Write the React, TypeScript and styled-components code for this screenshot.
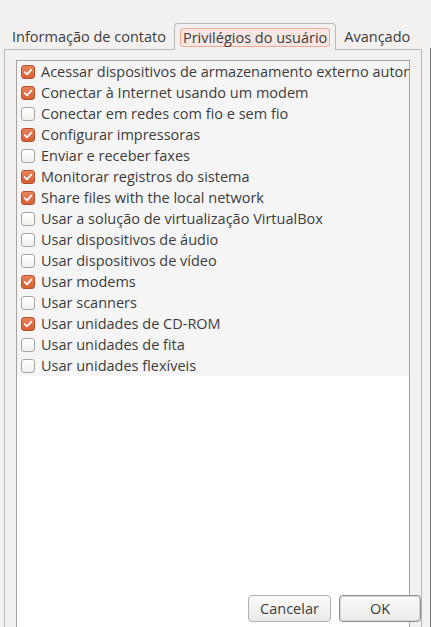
import React from "react";
import styled, { createGlobalStyle, css } from "styled-components";

const Global = createGlobalStyle`
  html, body { margin: 0; padding: 0; background: #f2f1f0; }
  body { font-family: "Open Sans", "Noto Sans", sans-serif; }
`;

const Page = styled.div`
  position: relative;
  width: 431px;
  height: 627px;
  overflow: hidden;
  background: #f2f1f0;
  color: #3c3c3c;
  font-size: 14.5px;
  display: flex;
  flex-direction: column;
  box-sizing: border-box;
  padding-top: 23px;
`;

const EdgeLine = styled.div`
  position: absolute;
  top: 48px;
  bottom: 0;
  left: 430px;
  width: 1px;
  background: #7a7875;
`;

const TabBar = styled.div`
  display: flex;
  align-items: flex-end;
  height: 26px;
  padding-left: 4px;
  position: relative;
  z-index: 1;
`;

const Tab = styled.div<{ $active?: boolean }>`
  height: 26px;
  box-sizing: border-box;
  display: flex;
  align-items: center;
  padding: 0 8px;
  white-space: nowrap;
  ${(p) =>
    p.$active &&
    css`
      height: 27px;
      margin-bottom: -1px;
      padding: 0 5px;
      border: 1px solid #bdbab5;
      border-bottom: none;
      border-radius: 4px 4px 0 0;
      background: #f2f1f0;
    `}
`;

const FocusLabel = styled.span`
  padding: 0 2px;
  border: 1px solid #f0a897;
  border-radius: 3px;
  background: #f6e6e2;
  line-height: 17px;
`;

const Panel = styled.div`
  flex: 1;
  margin: 0 9px 0 4px;
  border: 1px solid #bdbab5;
  border-bottom: none;
  padding: 10px 11px 0 11px;
  display: flex;
  flex-direction: column;
  min-height: 0;
`;

const ListBox = styled.div`
  flex: 1;
  border: 1px solid #a7a4a0;
  border-bottom: none;
  background: #ffffff;
  overflow: hidden;
`;

const Rows = styled.div`
  background: #f5f5f5;
`;

const Row = styled.div`
  height: 21px;
  display: flex;
  align-items: center;
  padding-left: 4px;
  gap: 6px;
  white-space: nowrap;
`;

const Box = styled.span<{ $checked: boolean }>`
  flex: none;
  width: 14px;
  height: 14px;
  box-sizing: border-box;
  border-radius: 3px;
  display: flex;
  align-items: center;
  justify-content: center;
  ${(p) =>
    p.$checked
      ? css`
          background: linear-gradient(#e8825a, #d65f35);
          border: 1px solid #b9502c;
        `
      : css`
          background: linear-gradient(#ffffff, #f1f0ef);
          border: 1px solid #a9a6a2;
        `}
`;

const Label = styled.span`
  line-height: 21px;
`;

const ButtonBar = styled.div`
  position: absolute;
  top: 595px;
  left: 248px;
  display: flex;
  gap: 8px;
`;

const Button = styled.button<{ $default?: boolean }>`
  height: 27px;
  box-sizing: border-box;
  font-family: inherit;
  font-size: 14.5px;
  color: #3c3c3c;
  border-radius: 4px;
  background: linear-gradient(#fbfbfa, #ebeae8);
  border: 1px solid #b3b0ab;
  padding: 0;
  width: 83px;
  ${(p) =>
    p.$default &&
    css`
      width: 82px;
      border: 1px solid #8f8c88;
      box-shadow: inset 0 0 0 1px #d9d7d4;
    `}
`;

const Check = () => (
  <svg width="10" height="10" viewBox="0 0 10 10">
    <path
      d="M1.8 5.2 L4 7.3 L8.3 2.6"
      fill="none"
      stroke="#ffffff"
      strokeWidth="1.8"
      strokeLinecap="round"
      strokeLinejoin="round"
    />
  </svg>
);

const items: [string, boolean][] = [
  ["Acessar dispositivos de armazenamento externo automaticamente", true],
  ["Conectar à Internet usando um modem", true],
  ["Conectar em redes com fio e sem fio", false],
  ["Configurar impressoras", true],
  ["Enviar e receber faxes", false],
  ["Monitorar registros do sistema", true],
  ["Share files with the local network", true],
  ["Usar a solução de virtualização VirtualBox", false],
  ["Usar dispositivos de áudio", false],
  ["Usar dispositivos de vídeo", false],
  ["Usar modems", true],
  ["Usar scanners", false],
  ["Usar unidades de CD-ROM", true],
  ["Usar unidades de fita", false],
  ["Usar unidades flexíveis", false],
];

export default function App() {
  return (
    <>
      <Global />
      <Page>
        <TabBar>
          <Tab>Informação de contato</Tab>
          <Tab $active>
            <FocusLabel>Privilégios do usuário</FocusLabel>
          </Tab>
          <Tab>Avançado</Tab>
        </TabBar>
        <Panel>
          <ListBox>
            <Rows>
              {items.map(([label, checked]) => (
                <Row key={label}>
                  <Box $checked={checked}>{checked && <Check />}</Box>
                  <Label>{label}</Label>
                </Row>
              ))}
            </Rows>
          </ListBox>
        </Panel>
        <EdgeLine />
        <ButtonBar>
          <Button>Cancelar</Button>
          <Button $default>OK</Button>
        </ButtonBar>
      </Page>
    </>
  );
}
